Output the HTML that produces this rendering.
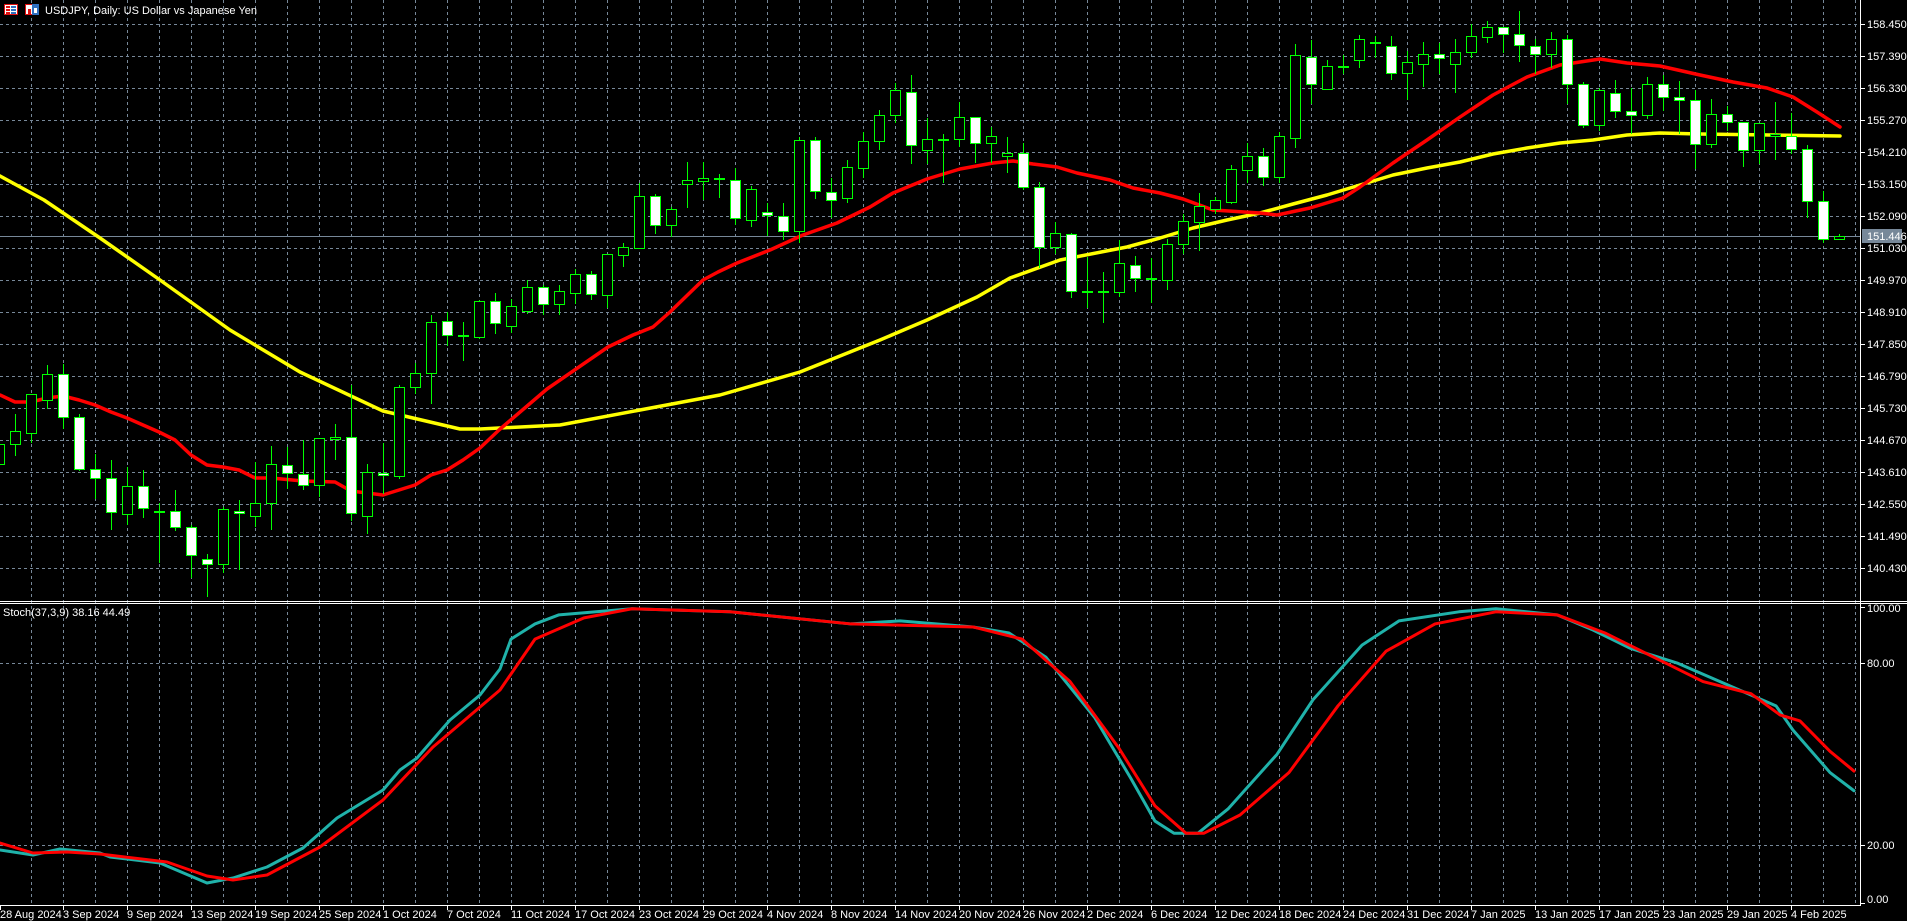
<!DOCTYPE html>
<html><head><meta charset="utf-8"><style>
html,body{margin:0;padding:0;background:#000;width:1907px;height:921px;overflow:hidden}
svg{display:block}
text{font-family:"Liberation Sans","DejaVu Sans",sans-serif;font-size:11px;fill:#fff}
</style></head><body>
<svg id="s" width="1907" height="921" xmlns="http://www.w3.org/2000/svg">
<rect width="1907" height="921" fill="#000"/>
<g id="grid" stroke="#778899" stroke-width="1" stroke-dasharray="3,3" shape-rendering="crispEdges"></g>
<line x1="0" y1="236.5" x2="1860" y2="236.5" stroke="#778899" stroke-width="1"/>
<g id="ma"></g>
<g id="candles" shape-rendering="crispEdges"></g>
<g id="stoch"></g>
<g stroke="#fff" stroke-width="1" shape-rendering="crispEdges">
<line x1="1860.5" y1="0" x2="1860.5" y2="906"/>
<line x1="0" y1="601.5" x2="1907" y2="601.5"/>
<line x1="0" y1="603.5" x2="1907" y2="603.5"/>
<line x1="0" y1="905.5" x2="1861" y2="905.5"/>
</g>
<g id="ticks" stroke="#fff" stroke-width="1" shape-rendering="crispEdges"></g>
<rect x="1862" y="229" width="40" height="14" fill="#778899"/>
<g>
<text x="1867" y="28">158.450</text>
<text x="1867" y="60">157.390</text>
<text x="1867" y="92">156.330</text>
<text x="1867" y="124">155.270</text>
<text x="1867" y="156">154.210</text>
<text x="1867" y="188">153.150</text>
<text x="1867" y="220">152.090</text>
<text x="1867" y="240">151.446</text>
<text x="1867" y="252">151.030</text>
<text x="1867" y="284">149.970</text>
<text x="1867" y="316">148.910</text>
<text x="1867" y="348">147.850</text>
<text x="1867" y="380">146.790</text>
<text x="1867" y="412">145.730</text>
<text x="1867" y="444">144.670</text>
<text x="1867" y="476">143.610</text>
<text x="1867" y="508">142.550</text>
<text x="1867" y="540">141.490</text>
<text x="1867" y="572">140.430</text>
<text x="1867" y="612">100.00</text>
<text x="1867" y="667">80.00</text>
<text x="1867" y="849">20.00</text>
<text x="1867" y="903">0.00</text>
</g>
<g>
<text x="0" y="918">28 Aug 2024</text>
<text x="63" y="918">3 Sep 2024</text>
<text x="127" y="918">9 Sep 2024</text>
<text x="191" y="918">13 Sep 2024</text>
<text x="255" y="918">19 Sep 2024</text>
<text x="319" y="918">25 Sep 2024</text>
<text x="383" y="918">1 Oct 2024</text>
<text x="447" y="918">7 Oct 2024</text>
<text x="511" y="918">11 Oct 2024</text>
<text x="575" y="918">17 Oct 2024</text>
<text x="639" y="918">23 Oct 2024</text>
<text x="703" y="918">29 Oct 2024</text>
<text x="767" y="918">4 Nov 2024</text>
<text x="831" y="918">8 Nov 2024</text>
<text x="895" y="918">14 Nov 2024</text>
<text x="959" y="918">20 Nov 2024</text>
<text x="1023" y="918">26 Nov 2024</text>
<text x="1087" y="918">2 Dec 2024</text>
<text x="1151" y="918">6 Dec 2024</text>
<text x="1215" y="918">12 Dec 2024</text>
<text x="1279" y="918">18 Dec 2024</text>
<text x="1343" y="918">24 Dec 2024</text>
<text x="1407" y="918">31 Dec 2024</text>
<text x="1471" y="918">7 Jan 2025</text>
<text x="1535" y="918">13 Jan 2025</text>
<text x="1599" y="918">17 Jan 2025</text>
<text x="1663" y="918">23 Jan 2025</text>
<text x="1727" y="918">29 Jan 2025</text>
<text x="1791" y="918">4 Feb 2025</text>
</g>
<g shape-rendering="crispEdges">
<rect x="4.5" y="4.5" width="13" height="10" fill="#fff" stroke="#e01010"/>
<rect x="6" y="6" width="4" height="2" fill="#e01010"/><rect x="6" y="9" width="4" height="2" fill="#e01010"/><rect x="6" y="12" width="4" height="2" fill="#e01010"/>
<rect x="11" y="6" width="5" height="2" fill="#3070c0"/><rect x="11" y="9" width="5" height="2" fill="#3070c0"/><rect x="11" y="12" width="5" height="2" fill="#3070c0"/>
<rect x="25.5" y="4.5" width="13" height="10" fill="#fff" stroke="#e01010"/>
<rect x="32" y="4" width="7" height="11" fill="#3070c0"/>
<rect x="28" y="9" width="3" height="5" fill="#e01010"/><rect x="34" y="8" width="3" height="5" fill="#fff"/>
</g>
<text x="45" y="14">USDJPY, Daily:  US Dollar vs Japanese Yen</text>
<text x="3" y="616">Stoch(37,3,9) 38.16 44.49</text>
</svg>
<script>
var NS="http://www.w3.org/2000/svg";
function el(p,t,a){var e=document.createElementNS(NS,t);for(var k in a)e.setAttribute(k,a[k]);p.appendChild(e);return e;}
var g=document.getElementById('grid');
for(var k=0;k<58;k++){var x=31.5+32*k;el(g,'line',{x1:x,y1:0,x2:x,y2:905});}
for(var k=0;k<18;k++){var y=24.5+32*k;el(g,'line',{x1:0,y1:y,x2:1860,y2:y});}
el(g,'line',{x1:0,y1:663.5,x2:1860,y2:663.5});el(g,'line',{x1:0,y1:845.5,x2:1860,y2:845.5});
var tk=document.getElementById('ticks');
for(var k=0;k<18;k++){var y=24.5+32*k;el(tk,'line',{x1:1860,y1:y,x2:1865,y2:y});}
[663.5,845.5,607.5,903.5].forEach(function(y){el(tk,'line',{x1:1860,y1:y,x2:1865,y2:y});});
for(var k=0;k<29;k++){var x=0.5+64*k-1;if(k==0)x=0.5;el(tk,'line',{x1:x,y1:905,x2:x,y2:910});}
var D=[[0,444,464,438,470],[0,431,444,414,455],[0,394,433,394,442],[0,374,400,365,408],[1,374,417,364,428],[1,417,469,414,470],[1,469,478,454,498],[1,478,512,460,529],[0,486,514,467,524],[1,486,508,470,517],[0,511,512,503,562],[1,511,527,490,530],[1,527,555,525,577],[1,559,564,554,596],[0,509,564,507,572],[1,511,513,500,569],[0,503,516,462,526],[0,464,503,446,529],[1,465,473,447,488],[1,474,485,440,489],[0,438,485,438,496],[0,437,439,424,459],[1,437,513,385,520],[0,472,516,464,533],[1,473,475,443,493],[0,387,476,385,478],[0,373,387,363,393],[0,322,373,315,403],[1,321,335,312,345],[0,335,336,322,360],[0,301,337,300,338],[1,301,323,293,333],[0,306,326,299,332],[0,287,311,280,313],[1,287,304,285,314],[0,291,304,285,314],[0,274,293,269,303],[1,274,294,271,299],[0,254,295,254,307],[0,247,255,243,266],[0,196,248,183,248],[1,196,225,194,233],[0,209,225,207,236],[0,180,184,162,207],[0,178,181,162,199],[0,178,179,174,197],[1,180,218,168,224],[0,189,220,186,226],[1,212,215,203,235],[1,216,231,203,239],[0,140,231,137,242],[1,140,191,137,198],[1,192,200,178,217],[0,167,198,160,202],[0,141,168,132,177],[0,115,141,110,149],[0,90,115,83,122],[1,92,145,75,163],[0,139,150,118,163],[0,139,140,134,182],[0,117,139,102,146],[1,117,143,117,162],[0,136,143,127,162],[0,153,156,137,172],[1,153,187,143,189],[1,187,247,182,267],[0,233,247,222,253],[1,234,291,233,297],[0,291,292,257,307],[0,291,292,272,322],[0,263,292,240,296],[1,265,278,256,291],[0,278,279,258,302],[0,244,280,239,289],[0,221,244,214,253],[0,206,222,193,250],[0,200,209,197,213],[0,169,202,165,203],[0,156,170,143,182],[1,156,177,148,185],[0,136,177,132,182],[0,55,138,44,147],[1,57,84,40,103],[0,66,89,60,89],[0,66,67,55,73],[0,39,60,35,67],[0,42,43,36,57],[1,46,73,36,79],[0,62,73,51,99],[0,54,64,42,86],[1,54,58,43,73],[0,52,64,39,92],[0,36,52,24,57],[0,27,37,21,42],[1,27,34,27,52],[1,34,45,11,61],[1,46,54,39,73],[0,39,54,32,67],[1,39,84,35,103],[1,84,125,82,127],[0,90,125,88,130],[1,93,111,80,117],[1,111,115,88,133],[0,84,115,77,118],[1,84,97,75,110],[1,97,100,81,133],[1,100,144,90,168],[0,114,144,99,147],[1,114,122,106,130],[1,122,150,122,166],[0,123,150,123,163],[0,134,136,102,159],[1,136,149,113,153],[1,149,201,145,217],[1,201,239,191,242],[0,236,239,234,239]];
var c=document.getElementById('candles');
D.forEach(function(d,i){
 var cx=16*i-1;
 el(c,'line',{x1:cx+0.5,y1:d[3],x2:cx+0.5,y2:d[4]+1,stroke:'#00ff00','stroke-width':1});
 if(d[2]-d[1]<=1){el(c,'rect',{x:cx-5,y:d[1],width:11,height:2,fill:'#00ff00'});}
 else{el(c,'rect',{x:cx-4.5,y:d[1]+0.5,width:10,height:d[2]-d[1],fill:d[0]?'#fff':'#000',stroke:'#00ff00','stroke-width':1});}
});
function pl(p,pts,col,w){el(p,'polyline',{points:pts.map(function(q){return q.join(',')}).join(' '),fill:'none',stroke:col,'stroke-width':w,'stroke-linejoin':'round','stroke-linecap':'round'});}
var m=document.getElementById('ma');
pl(m,[[0,176],[44,200],[100,238],[160,280],[230,330],[300,372],[383,411],[460,429],[480,429],[560,425],[640,410],[720,395],[800,372],[850,352],[880,340],[927,320],[977,297],[1010,278],[1060,260],[1127,247],[1160,238],[1193,228],[1227,220],[1260,213],[1293,204],[1327,195],[1360,185],[1393,175],[1427,168],[1460,162],[1493,154],[1527,148],[1560,143],[1593,140],[1627,135],[1660,133],[1700,134],[1840,136]],'#ffff00',3.5);
pl(m,[[0,395],[15,402],[31,402],[47,398],[63,396],[79,400],[95,405],[111,412],[127,418],[143,425],[159,432],[175,440],[191,455],[207,465],[223,467],[239,470],[255,478],[271,478],[303,481],[335,482],[351,491],[367,493],[383,495],[399,490],[415,485],[431,475],[447,470],[463,460],[480,448],[499,430],[547,389],[608,347],[633,335],[653,327],[670,312],[703,280],[718,272],[737,263],[770,250],[803,235],[837,223],[870,207],[893,193],[927,179],[960,169],[993,163],[1013,161],[1033,164],[1057,167],[1077,173],[1110,180],[1133,188],[1160,193],[1183,199],[1213,210],[1260,213],[1277,215],[1310,208],[1343,198],[1360,187],[1393,163],[1427,140],[1460,117],[1493,95],[1527,77],[1560,65],[1600,59],[1627,63],[1660,66],[1700,75],[1733,82],[1767,88],[1793,97],[1817,112],[1840,127]],'#ff0000',3.5);
var s=document.getElementById('stoch');
function sv(a){return a.map(function(q){return [q[0],906-q[1]*3.033];});}
pl(s,[[0,850],[33,855],[60,849],[100,853],[110,857],[160,863],[207,883],[233,878],[267,867],[303,848],[337,818],[383,790],[400,770],[417,758],[450,720],[480,695],[500,669]].concat(sv([[511,88],[535,93],[559,96],[632,98],[730,97],[790,95],[851,93],[900,94],[973,92],[1009,90],[1046,82],[1095,62],[1131,42],[1155,28],[1174,24],[1198,24],[1228,32],[1277,50],[1313,68],[1362,86],[1399,94],[1459,97],[1496,98],[1557,96],[1593,91],[1630,85],[1678,80],[1727,73],[1776,66],[1793,58],[1830,44],[1854,38]])),'#20b2aa',3);
pl(s,[[0,843],[33,853],[67,852],[100,854],[167,862],[207,876],[233,880],[267,875],[320,847],[383,800],[433,747],[500,690]].concat(sv([[535,88],[584,95],[632,98],[730,97],[851,93],[973,92],[1022,88],[1070,74],[1119,52],[1155,33],[1186,24],[1204,24],[1240,30],[1289,44],[1338,66],[1386,84],[1435,93],[1496,97],[1557,96],[1605,90],[1654,82],[1703,74],[1751,70],[1780,63],[1800,61],[1830,51],[1854,44.5]])),'#ff0000',3);
</script>
</body></html>
